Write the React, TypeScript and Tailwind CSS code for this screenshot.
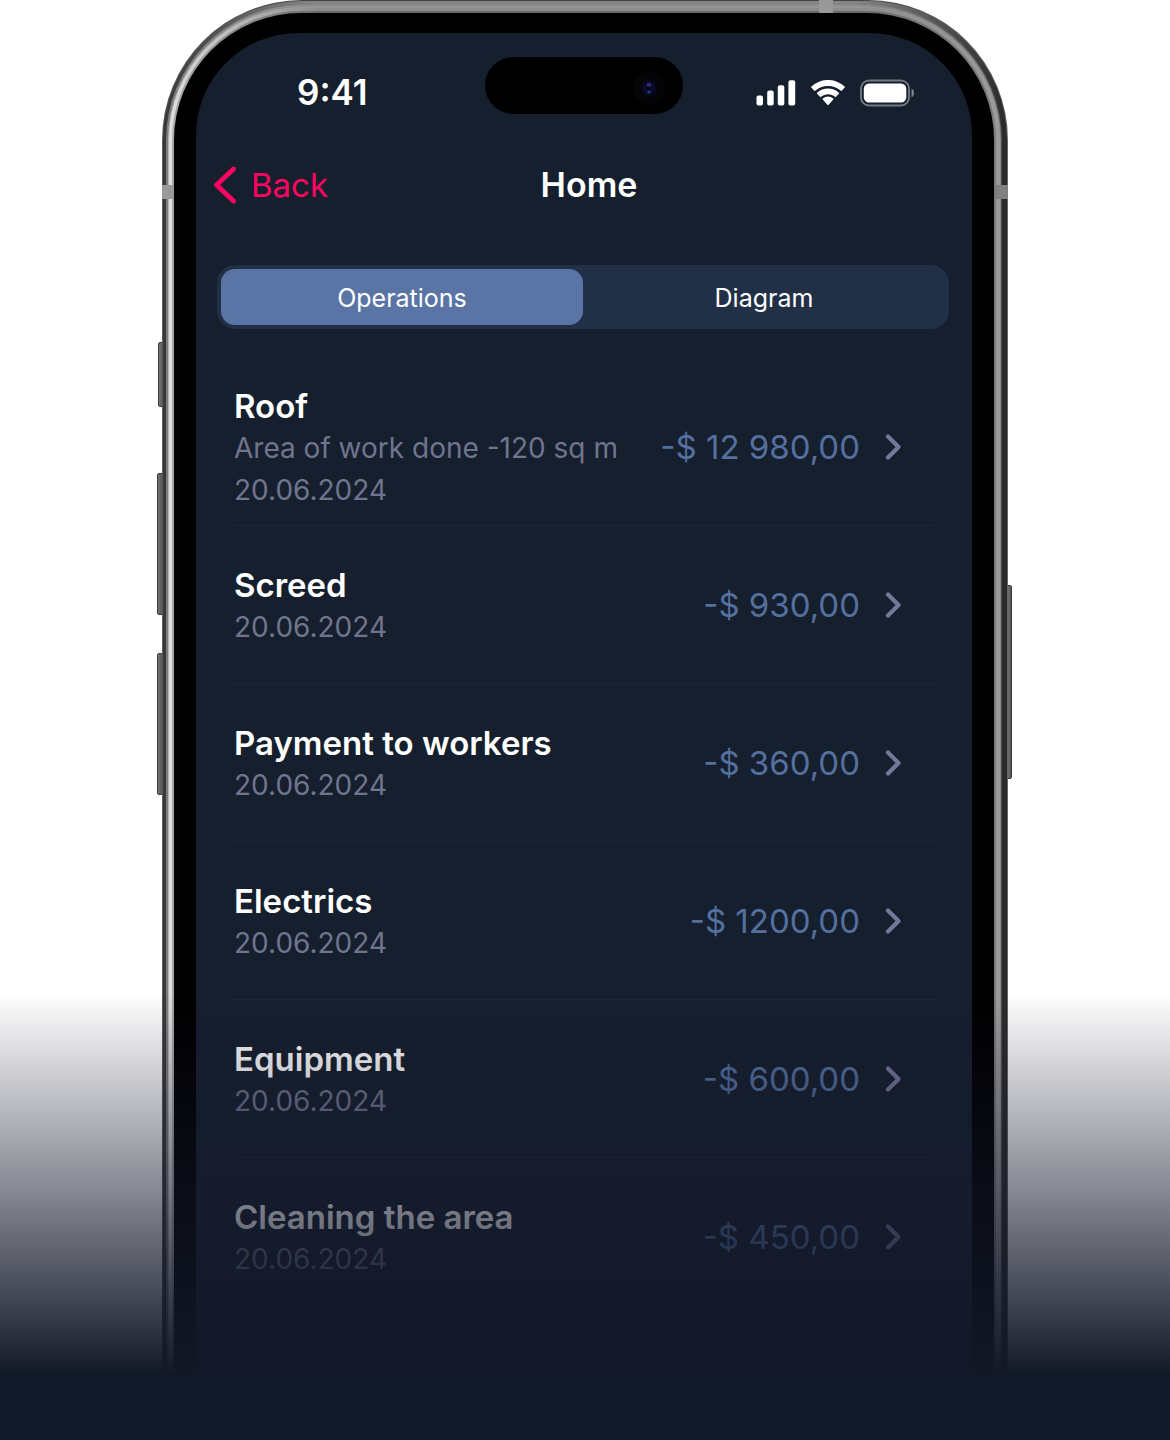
import { useState } from "react";

type Operation = {
  title: string;
  note?: string;
  date: string;
  amount: string;
};

const operations: Operation[] = [
  { title: "Roof", note: "Area of work done -120 sq m", date: "20.06.2024", amount: "-$ 12 980,00" },
  { title: "Screed", date: "20.06.2024", amount: "-$ 930,00" },
  { title: "Payment to workers", date: "20.06.2024", amount: "-$ 360,00" },
  { title: "Electrics", date: "20.06.2024", amount: "-$ 1200,00" },
  { title: "Equipment", date: "20.06.2024", amount: "-$ 600,00" },
  { title: "Cleaning the area", date: "20.06.2024", amount: "-$ 450,00" },
];

const tabs = ["Operations", "Diagram"];

function SignalIcon() {
  return (
    <svg width="40" height="26" viewBox="0 0 40 26" fill="#fff" aria-hidden="true">
      <rect x="0.5" y="15.5" width="6.5" height="10" rx="2" />
      <rect x="11.2" y="10.5" width="6.5" height="15" rx="2" />
      <rect x="21.8" y="5.2" width="6.5" height="20.3" rx="2" />
      <rect x="32.4" y="0.3" width="6.8" height="25.2" rx="2" />
    </svg>
  );
}

function WifiIcon() {
  return (
    <svg width="36" height="26" viewBox="0 0 36 26" fill="#fff" aria-hidden="true">
      <path d="M18 6c4.900 0 9.400 1.700 12.800 4.700.25.25.66.25.91 0l2.900-2.900a.85.85 0 0 0 0-1.200A24 24 0 0 0 1.400 6.600a.85.85 0 0 0 0 1.200l2.900 2.900c.25.25.66.25.91 0A18.800 18.800 0 0 1 18 6z" />
      <path d="M18 14.200c2.700 0 5.200 1 7.100 2.500.3.25.7.25.95 0l2.800-2.850a.85.85 0 0 0 0-1.220 16.400 16.400 0 0 0-21.700 0 .85.85 0 0 0 0 1.220l2.800 2.850c.25.25.65.25.95 0A11 11 0 0 1 18 14.200z" />
      <path d="M23.200 19.600a.8.8 0 0 0 0-1.200 8.200 8.200 0 0 0-10.400 0 .8.8 0 0 0 0 1.200l4.550 5.100c.4.400.9.400 1.300 0z" />
    </svg>
  );
}

function BatteryIcon() {
  return (
    <svg width="54" height="28" viewBox="0 0 54 28" fill="none" aria-hidden="true">
      <rect x="1" y="1.500" width="48" height="25" rx="8" stroke="#fff" strokeOpacity="0.4" strokeWidth="1.800" />
      <rect x="3.800" y="4.500" width="42.500" height="19" rx="5.200" fill="#fff" />
      <path d="M51.500 9.500v9c1.500-.8 2.500-2.500 2.500-4.500s-1-3.700-2.500-4.500z" fill="#fff" fillOpacity="0.45" />
    </svg>
  );
}

function StatusBar() {
  return (
    <div className="relative flex h-[118px] items-center justify-between pr-[58px] pl-[101px]">
      <time className="text-[35px] leading-10 font-semibold text-white">9:41</time>
      <div className="absolute top-6 left-1/2 flex h-[57px] w-[198px] -translate-x-1/2 items-center justify-end rounded-full bg-black pt-1 pr-[18px]">
        <span className="flex size-8 items-center justify-center rounded-full bg-[#050508]">
          <svg width="18" height="18" viewBox="0 0 18 18" aria-hidden="true">
            <circle cx="9" cy="9" r="8.500" fill="#07071c" />
            <circle cx="9" cy="9" r="6" fill="#090a2e" />
            <circle cx="9" cy="6" r="2.200" fill="#2c2f6b" />
            <circle cx="9" cy="9.500" r="2" fill="#04040f" />
            <circle cx="9" cy="13" r="1.800" fill="#1a3a66" />
          </svg>
        </span>
      </div>
      <div className="flex items-center gap-3.5 pt-0.5">
        <SignalIcon />
        <WifiIcon />
        <BatteryIcon />
      </div>
    </div>
  );
}

function NavBar() {
  return (
    <header className="grid h-[68px] grid-cols-[1fr_auto_1fr] items-center pr-1.5 pl-4">
      <button type="button" className="flex items-center gap-3.5 justify-self-start text-[33px] leading-10 text-[#ff0461]">
        <svg width="25" height="40" viewBox="0 0 25 40" fill="none" stroke="currentColor" strokeWidth="4.800" strokeLinecap="round" strokeLinejoin="round" aria-hidden="true">
          <path d="M21.500 4 4.500 20l17 16" />
        </svg>
        Back
      </button>
      <h1 className="text-[34px] leading-10 font-semibold text-white">Home</h1>
    </header>
  );
}

function OperationRow({ title, note, date, amount }: Operation) {
  return (
    <li className="border-b border-[#1e2736]">
      <button type="button" className="flex min-h-[157px] w-full items-center justify-between pr-8 text-left">
        <span className="flex flex-col pt-0.5 text-[28px] leading-[42px] text-[#70758f]">
          <span className="text-[33px] font-semibold text-white">{title}</span>
          {note && <span>{note}</span>}
          <span>{date}</span>
        </span>
        <span className="flex items-center gap-6 text-[33px] leading-[42px] text-[#54709f]">
          {amount}
          <svg width="18" height="26" viewBox="0 0 18 26" fill="none" stroke="#74789a" strokeWidth="4.200" strokeLinecap="round" strokeLinejoin="round" aria-hidden="true">
            <path d="M4 2.500 14.500 13 4 23.500" />
          </svg>
        </span>
      </button>
    </li>
  );
}

function Screen() {
  const [active, setActive] = useState(tabs[0]);
  return (
    <div className="rounded-t-[102px] bg-[#161f2e] pb-[126px]">
      <StatusBar />
      <NavBar />
      <div role="tablist" className="mt-[46px] mr-[23px] ml-[21px] grid grid-cols-2 rounded-[18px] bg-[#212f47] p-1">
        {tabs.map((tab) => (
          <button
            key={tab}
            type="button"
            role="tab"
            aria-selected={tab === active}
            onClick={() => setActive(tab)}
            className="h-14 rounded-[14px] pt-0.5 text-[25px] leading-8 text-white aria-selected:bg-[#5a75a5]"
          >
            {tab}
          </button>
        ))}
      </div>
      <ul className="mx-[38px] mt-[39px]">
        {operations.map((op) => (
          <OperationRow key={op.title} {...op} />
        ))}
      </ul>
    </div>
  );
}

function SideButtons() {
  const metal = "absolute rounded-[2px] border border-[#3a3a3a] bg-[linear-gradient(to_right,#777,#555)]";
  return (
    <div aria-hidden="true">
      <div className={`${metal} top-[342px] -left-1 h-[65px] w-1.5`} />
      <div className={`${metal} top-[473px] -left-[5px] h-[142px] w-1.5`} />
      <div className={`${metal} top-[653px] -left-[5px] h-[142px] w-1.5`} />
      <div className={`${metal} top-[585px] -right-1 h-[194px] w-1.5`} />
    </div>
  );
}

function AntennaBands() {
  return (
    <div aria-hidden="true">
      <div className="absolute top-[185px] left-0 h-3.5 w-3 bg-[#999]" />
      <div className="absolute top-[185px] right-0 h-3.5 w-3 bg-[#808080]" />
      <div className="absolute top-0 right-[175px] h-[13px] w-3.5 bg-[#999]" />
    </div>
  );
}

export default function App() {
  return (
    <main className="relative grid min-h-screen overflow-hidden bg-white font-['Inter','Liberation_Sans',sans-serif]">
      <div className="relative mx-auto grid w-full max-w-[846px]">
        <SideButtons />
        <div className="relative col-start-1 row-start-1 grid rounded-t-[140px] bg-[linear-gradient(to_right,#5b5b5b,#444_18%,#444_82%,#666)] px-px pt-px">
          <div className="grid rounded-t-[139px] bg-[linear-gradient(to_right,#383838,#858585_18%,#858585_82%,#2a2a2a)] pt-1 pr-[5px] pl-[3px]">
            <div className="grid rounded-t-[135px] bg-[linear-gradient(to_right,#7c7c7c,#939393_18%,#939393_82%,#505050)] pt-0.5 pr-px pl-0.5">
              <div className="grid rounded-t-[133px] bg-[linear-gradient(to_right,#b4b4b4,#979797_18%,#979797_82%,#888)] px-px pt-px">
                <div className="grid rounded-t-[132px] bg-[linear-gradient(to_right,#dedede,#8c8c8c_18%,#8c8c8c_82%,#9a9a9a)] pt-[3px] pr-1 pl-[3px]">
                  <div className="grid rounded-t-[129px] bg-[linear-gradient(to_right,#a8a8a8,#6a6a6a_18%,#6a6a6a_82%,#7a7a7a)] px-0.5 pt-0.5">
                    <div className="grid rounded-t-[127px] bg-black px-[22px] pt-5">
                      <Screen />
                    </div>
                  </div>
                </div>
              </div>
            </div>
          </div>
        </div>
        <AntennaBands />
      </div>
      <div
        aria-hidden="true"
        className="pointer-events-none absolute inset-x-0 bottom-0 h-[450px] bg-[linear-gradient(to_bottom,rgba(22,24,46,0),rgba(20,24,44,0.5)_43%,#111827_85%)]"
      />
    </main>
  );
}
